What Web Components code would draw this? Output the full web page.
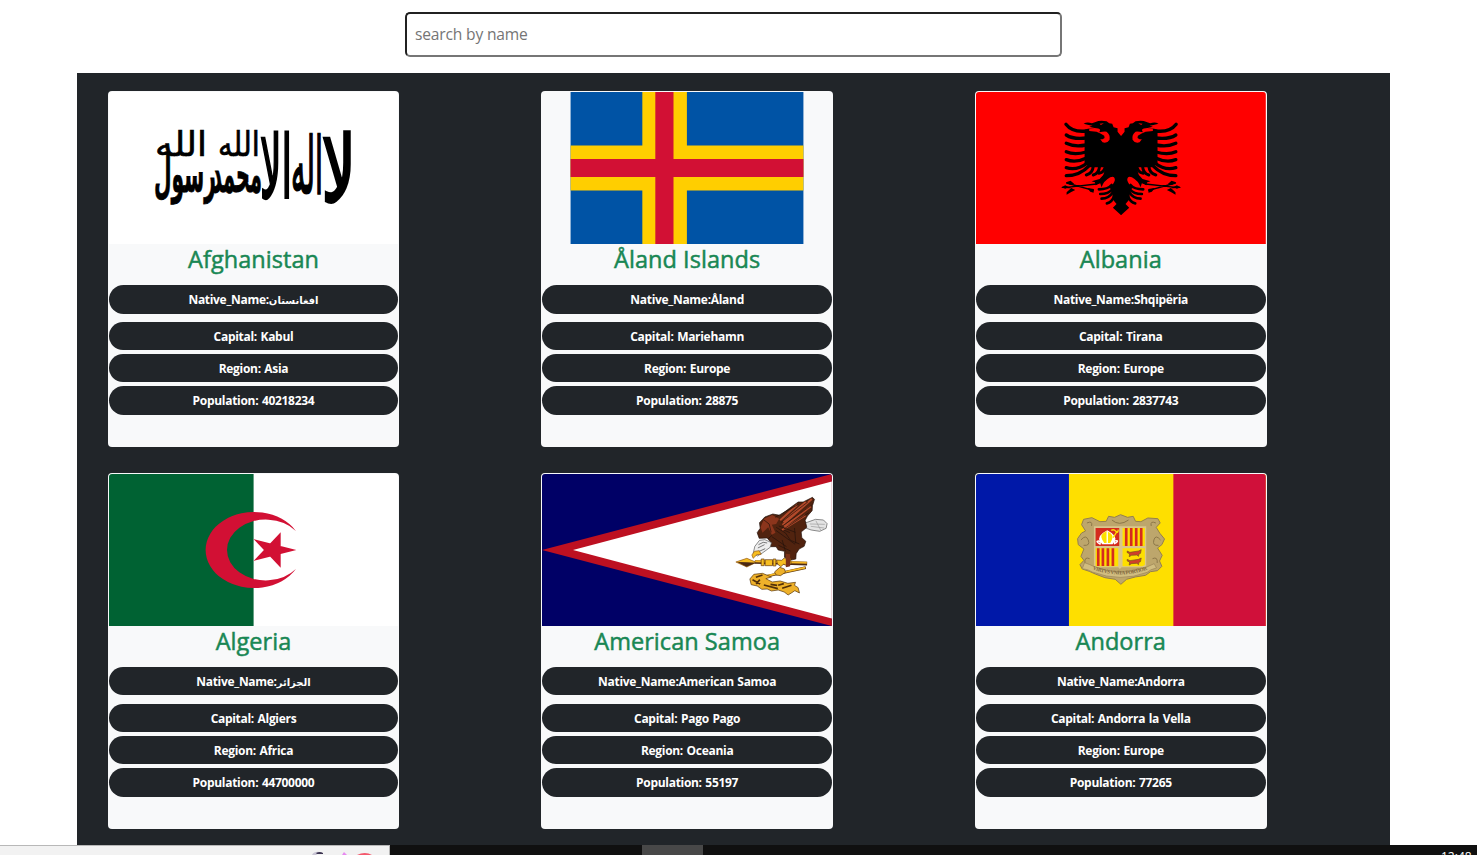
<!DOCTYPE html>
<html lang="en">
<head>
<meta charset="utf-8">
<title>Countries</title>
<style>
html,body{margin:0;height:100%;overflow:hidden;background:#fff}
body{font-family:"Open Sans","Noto Sans","DejaVu Sans",sans-serif;color:#212529}
</style>
</head>
<body>
<countries-app></countries-app>

<template id="flag-af"><svg viewBox="109 92 290 152" preserveAspectRatio="none">
<path fill="#fff" d="M109 92h290v152H109z"/>
<g fill="#000" stroke="#000" stroke-width=".5" font-family="DejaVu Sans,sans-serif" direction="rtl" text-anchor="middle">
<text transform="translate(339 202) scale(1 3.4)" font-size="27" textLength="34" lengthAdjust="spacingAndGlyphs" stroke-width="1">لا</text>
<text transform="translate(307 193) scale(1 2.9)" font-size="27" textLength="32" lengthAdjust="spacingAndGlyphs" stroke-width=".8">اله</text>
<text transform="translate(276 198) scale(1 3.2)" font-size="27" textLength="32" lengthAdjust="spacingAndGlyphs" stroke-width=".9">الا</text>
<text transform="translate(237 192) scale(1 1.7)" font-size="30" font-weight="700" textLength="50" lengthAdjust="spacingAndGlyphs">محمد</text>
<text transform="translate(185 192) scale(1 1.7)" font-size="30" font-weight="700" textLength="62" lengthAdjust="spacingAndGlyphs">رسول</text>
<text transform="translate(239 156) scale(1 1.35)" font-size="25" textLength="42" lengthAdjust="spacingAndGlyphs">الله</text>
<text transform="translate(181 156) scale(1 1.35)" font-size="25" textLength="52" lengthAdjust="spacingAndGlyphs">الله</text>
</g></svg></template>

<template id="flag-ax"><svg viewBox="542 92 290 152" preserveAspectRatio="none">
<path fill="#0053a5" d="M570.6 92h233v152h-233z"/>
<path fill="#ffce00" d="M642.4 92H687v152h-44.6zM570.6 145.6h233v44.8h-233z"/>
<path fill="#d21034" d="M655.4 92h18.2v152h-18.2zM570.6 159h233v18h-233z"/></svg></template>

<template id="flag-al"><svg viewBox="976 92 290 152" preserveAspectRatio="none">
<path fill="red" d="M976 92h290v152H976z"/>
<g transform="translate(1050 105) scale(.3333)">
<g><path d="M214 94 203 80 203 70 191 67 187 56 178 55 170 49Q150 45 137 51L126 55Q112 50 101 56L116 60 128 62 118 65 134 69 114 71 104 74V176L122 187 168 187 160 210 149 222 125 229 135 232 137 241 151 235 155 247Q161 228 181 217 194 211 195 225 192 239 177 247L185 254 190 285 200 297 189 308 213 330H214Z"/>
<g fill="none" stroke="#000" stroke-linecap="round" stroke-width="10">
<path d="M110 78Q67 83 48 58M110 99Q70 104 49 90M109 120Q74 127 49 115M109 141Q72 151 49 140M110 159Q77 175 49 164M112 174Q81 198 49 188M119 181Q90 212 49 212"/>
<path stroke-width="9" d="M130 184Q128 205 109 210M149 184Q147 205 130 210M166 184Q164 202 147 205"/>
<path stroke-width="8" d="M185 240Q174 253 147 253M188 252Q176 267 151 267M188 263Q177 281 155 281M194 271Q186 293 171 295"/>
<path stroke-width="4" d="M140 237 50 247M130 256 50 234M37 247 60 248"/></g>
<path d="m48 232 14-5 11 10-12 3zm2 30 14-13 12 6-12 6-14 8zM35 247l11-6 10 5-10 5zM112 249l20 3-1 11-10-3z"/>
<path fill="red" d="M118 71Q145 66 151 75L148 82Q161 79 170 80 182 89 179 104 172 116 158 112L151 103 158 103 164 99 163 92 153 86 140 80 118 78zM149 56l13-1-9 5z"/></g>
<g transform="translate(427 0) scale(-1 1)"><path d="M214 94 203 80 203 70 191 67 187 56 178 55 170 49Q150 45 137 51L126 55Q112 50 101 56L116 60 128 62 118 65 134 69 114 71 104 74V176L122 187 168 187 160 210 149 222 125 229 135 232 137 241 151 235 155 247Q161 228 181 217 194 211 195 225 192 239 177 247L185 254 190 285 200 297 189 308 213 330H214Z"/>
<g fill="none" stroke="#000" stroke-linecap="round" stroke-width="10">
<path d="M110 78Q67 83 48 58M110 99Q70 104 49 90M109 120Q74 127 49 115M109 141Q72 151 49 140M110 159Q77 175 49 164M112 174Q81 198 49 188M119 181Q90 212 49 212"/>
<path stroke-width="9" d="M130 184Q128 205 109 210M149 184Q147 205 130 210M166 184Q164 202 147 205"/>
<path stroke-width="8" d="M185 240Q174 253 147 253M188 252Q176 267 151 267M188 263Q177 281 155 281M194 271Q186 293 171 295"/>
<path stroke-width="4" d="M140 237 50 247M130 256 50 234M37 247 60 248"/></g>
<path d="m48 232 14-5 11 10-12 3zm2 30 14-13 12 6-12 6-14 8zM35 247l11-6 10 5-10 5zM112 249l20 3-1 11-10-3z"/>
<path fill="red" d="M118 71Q145 66 151 75L148 82Q161 79 170 80 182 89 179 104 172 116 158 112L151 103 158 103 164 99 163 92 153 86 140 80 118 78zM149 56l13-1-9 5z"/></g>
</g></svg></template>

<template id="flag-dz"><svg viewBox="109 474 290 152" preserveAspectRatio="none">
<path fill="#fff" d="M109 474h290v152H109z"/><path fill="#006233" d="M109 474h144.7v152H109z"/>
<path fill="#d21034" d="M296 531A48.4 38 0 1 0 296 569 38.7 30.4 0 1 1 296 531Z"/>
<path fill="#d21034" d="M296.5 550 253.7 539.1 280.8 567.8V532.2L253.7 560.9Z"/></svg></template>

<template id="flag-as"><svg viewBox="542 474 290 152" preserveAspectRatio="none">
<path fill="#006" d="M542 474h290v152H542z"/><path fill="#bd1021" d="M542 550 832 474V626Z"/><path fill="#fff" d="M573 550 832 481.5V618.5Z"/>
<g transform="translate(730 490) scale(.3333)" stroke-linejoin="round">
<path fill="#e4e4e4" stroke="#555" stroke-width="2" d="M215 100 232 97 257 88 281 90 292 101 289 115 270 124 244 120 222 112z"/>
<path fill="none" stroke="#999" stroke-width="2" d="m240 102 45 1m-42 6 40 5m-25-22 15 29"/>
<path fill="#51230f" stroke="#21100a" stroke-width="2" d="M124 158 112 144 88 145 82 128 91 115 89 98 105 81 129 72 150 76 205 36 220 36 248 22 254 28 248 47 247 62 233 78 226 91 231 112 214 126 216 143 228 154 223 169 208 177 199 191 198 207 181 211 164 202 164 184 145 180 139 170 121 170z"/>
<path fill="#8b351c" d="M92 112 103 86 127 75 148 86 139 102 126 104 137 128 126 134 115 112 98 128z"/>
<path fill="none" stroke="#b3492a" stroke-width="6" d="m151 91 51-46m-42 50 68-59m-70 69 88-78m-83 83 80-61M157 120l70-44"/>
<path fill="none" stroke="#21100a" stroke-width="2" d="m136 82 70-39m-52 54 80-61m-76 72 88-63m-84 72 75-49M101 89l17 13 6 25M139 112l28 17 15 22 27 11m-62-54 50 19m-71 13 44 30m-32-49 58 42m-50 3 36 17m-20-63 18 8m-53 7-12 12m42 3 10 34m27-70 4 46"/>
<path fill="#eee" stroke="#555" stroke-width="2" d="M125 158 105 149 89 151 75 169 70 190 83 198 99 188 121 172z"/><path fill="none" stroke="#777" stroke-width="3" d="m86 164 14-7 12 2m-28 15 20-10m-18 21 20-9"/>
<path fill="#f6bd20" stroke="#8e5210" stroke-width="2" d="m74 184 14-2 6 11-13 1-11 11-4-10zM18 216 51 205 79 217 51 231z"/>
<path fill="#4a2814" d="m22 216 28 14 29-12-28-1z"/>
<path stroke="#4a2814" stroke-width="11" d="m75 216 157 5"/><path stroke="#f3b321" stroke-width="6" d="m76 214 155 4"/>
<path fill="#f6bd20" stroke="#61350d" stroke-width="2" d="M94 207h9v20h-9zM106 209h22v18h-22zM130 207h8v21h-8zM143 222l-3-12 16 1 7-7 10 5 8-4 3 15-9 8-14-5-8 7z"/>
<path fill="#793017" d="m168 191 13 2v36l-13 3z"/>
<path stroke="#5d360e" stroke-width="8" d="m91 263 137-30"/><path stroke="#f7ba25" stroke-width="5" d="m91 262 135-29"/>
<path fill="#eeb12a" stroke="#523009" stroke-width="2" d="m134 246 16-14 14 5 3 10-15 10-13-2zM98 250 72 253 60 267 64 284 82 288 96 298 112 297 125 303 145 300 163 306 175 315 186 308 195 302 209 309 205 293 194 286 197 277 174 280 151 273 127 276 108 266 125 261z"/>
<path fill="none" stroke="#523009" stroke-width="5" d="m68 269 23 13m-13-20 20-7m4 30 42 11m-22-13 20 3m15 9 28-9m-40 0 17-5M90 269l-11 13"/></g></svg></template>

<template id="flag-ad"><svg viewBox="976 474 290 152" preserveAspectRatio="none">
<path fill="#fedf00" d="M976 474h290v152H976z"/><path fill="#0018a8" d="M976 474h93v152h-93z"/><path fill="#d0103a" d="M1173.5 474h92.5v152h-92.5z"/>
<g transform="translate(1065 505) scale(.3333)">
<path fill="#bda66c" stroke="#94804e" stroke-width="3" d="M131 34 149 37 167 29 188 37 205 34 212 49 228 50 249 39 279 41 286 54 274 67 285 85 299 102 291 119 278 129 292 151 284 168 291 184 278 197 257 200 242 211 211 216 185 223 168 238 151 223 120 218 91 207 73 199 52 192 45 179 57 166 48 154 57 132 40 119 38 101 50 84 62 78 50 59 56 43 81 38 105 50 124 49z"/>
<path fill="none" stroke="#8c7648" stroke-width="3" d="M141 45q22 20 50 0M66 54q18-8 14 9M273 54q-18-8-14 9M48 105q15-18 22 0t-14 16M287 105q-15-18-20 0t14 16M60 174q-2-20 14-13M277 174q2-20-14-13"/>
<path fill="#d9c58c" d="M87 64h157v123H170l-5 5-5-5H87z"/>
<path fill="#d52b1e" d="M92 69h71v54H92z"/><path fill="#fedf00" d="M173 69h67v54h-67zM92 130h68v54H92zM173 130h67v50l-8 4h-59z"/>
<path stroke="#d52b1e" stroke-width="8" d="M184 69v54m15-54v54m15-54v54m15-54v54M100 130v53m14-53v53m15-53v53m15-53v53"/>
<path fill="#fff" d="M127 76q32 17 22 33l-6 9h-31l-7-9q-10-16 22-33z"/><path fill="#fedf00" d="M126 78q24 12 15 26l-5 10h-18l-6-10q-10-16 14-26z"/><path stroke="#fff" stroke-width="4" d="M127 79v37"/>
<path fill="none" stroke="#fff" stroke-width="4" d="M107 118q-17-10-7-10t4 11M147 117q17-10 7-10t-4 10"/><path fill="none" stroke="#fedf00" stroke-width="4" d="M139 76q8-5 14 3t7-5M145 98l12-20"/>
<path fill="#d0402b" stroke="#73571a" stroke-width="2" d="m187 138 8 4 26-4 8-4-2 11-5 2-1 7-5-4-16 1-7 4 1-9-7-3zM187 163l8 4 26-4 8-4-2 11-5 2-1 7-5-4-16 1-7 4 1-9-7-3z"/>
<path fill="#d1bd80" stroke="#9a8454" stroke-width="2" d="M59 173q15 5 27 11 82 35 162 1l20-9 7 13q-19 4-28 13-80 31-165-1-12-8-30-10z"/>
<path id="motto" fill="none" d="M83 193q84 31 168-1"/>
<text font-family="Liberation Serif,serif" font-weight="700" font-size="16" fill="#80683d"><textPath href="#motto" textLength="168">VIRTVS VNITA FORTIOR</textPath></text>
</g></svg></template>

<script>
class SearchBox extends HTMLElement{
 constructor(){super();this.attachShadow({mode:'open'}).innerHTML=`<style>
 :host{display:block;width:657px;height:45px;margin:12px 0 16px 405px}
 input{box-sizing:border-box;display:block;width:100%;height:100%;padding:0 8px 1px;border:2px solid;border-color:#212121 #767676 #767676 #212121;border-radius:5px;background:#fff;font:15.6px "Open Sans","Noto Sans",sans-serif;letter-spacing:-.18px;color:#212529;outline:0}
 input::placeholder{color:#757575;opacity:1}
 </style><input type="text" placeholder="search by name">`}
}
customElements.define('search-box',SearchBox);

class InfoPill extends HTMLElement{
 constructor(){super();this.attachShadow({mode:'open'}).innerHTML=`<style>
 :host{display:flex;align-items:center;justify-content:center;box-sizing:border-box;height:28.4px;margin-bottom:3.9px;border-radius:15px;background:#212529;color:#fff;font-size:12px;line-height:16px;font-weight:700;letter-spacing:-.3px;word-spacing:.8px;white-space:pre;padding-top:1.7px}
 ::slotted(bdi){font-size:10px;letter-spacing:0}
 </style><span><slot></slot></span>`}
}
customElements.define('info-pill',InfoPill);

class CountryCard extends HTMLElement{
 connectedCallback(){
  const root=this.attachShadow({mode:'open'});
  root.innerHTML=`<style>
  :host{display:block;box-sizing:border-box;width:291.8px;height:355.8px;padding:1px;background:#f8f9fa;border-radius:4px;overflow:hidden}
  .flag{height:152px}
  .flag svg{display:block;width:100%;height:100%;border-radius:3px 3px 0 0}
  h2{margin:0;height:41.3px;line-height:31px;font-size:23.5px;font-weight:500;text-align:center;color:#198754;letter-spacing:.05px;-webkit-text-stroke:.5px #198754;white-space:nowrap}
  .first{margin-bottom:8.1px}
  </style><div class="flag"></div><h2><slot></slot></h2>
  <info-pill class="first"></info-pill><info-pill></info-pill><info-pill></info-pill><info-pill></info-pill>`;
  root.querySelector('.flag').append(document.getElementById('flag-'+this.getAttribute('code')).content.cloneNode(true));
  const p=root.querySelectorAll('info-pill'), native=this.getAttribute('native');
  p[0].textContent='Native_Name:';
  if(/[\u0600-\u06ff]/.test(native)){
   const b=document.createElement('bdi');b.textContent=native;p[0].append(b);
  }else p[0].append(native);
  p[1].textContent='Capital: '+this.getAttribute('capital');
  p[2].textContent='Region: '+this.getAttribute('region');
  p[3].textContent='Population: '+this.getAttribute('population');
 }
}
customElements.define('country-card',CountryCard);

class TaskBar extends HTMLElement{
 constructor(){super();this.attachShadow({mode:'open'}).innerHTML=`<style>
 :host{display:flex;height:10px;background:#101010;overflow:hidden;color:#fff;font-size:12px}
 .search{box-sizing:border-box;width:390px;height:10px;background:#f2f2f2;border-top:1px solid #b8b8b8;border-right:1px solid #b8b8b8}
 svg{display:block;margin-left:308px}
 .active{width:61px;margin-left:252px;background:#484848}
 time{margin-left:738px;margin-top:5px;line-height:14px;white-space:nowrap}
 </style><div class="search"><svg width="70" height="9" viewBox="308 846 70 9"><path fill="#c9c5d4" d="M312 855q2-4 8-3l-4 3z"/><path fill="#3b3350" d="M316 853q4-2 7 0v1h-6z"/><path fill="#e78af0" d="m342 855 2-3 3 3z"/><path fill="#f4586c" d="M357 855q8-4 15 0z"/></svg></div><div class="active"></div><time>12:48</time>`}
}
customElements.define('task-bar',TaskBar);

class CountriesApp extends HTMLElement{
 constructor(){super();
  const data=[['af','Afghanistan','افغانستان','Kabul','Asia','40218234'],['ax','Åland Islands','Åland','Mariehamn','Europe','28875'],['al','Albania','Shqipëria','Tirana','Europe','2837743'],['dz','Algeria','الجزائر','Algiers','Africa','44700000'],['as','American Samoa','American Samoa','Pago Pago','Oceania','55197'],['ad','Andorra','Andorra','Andorra la Vella','Europe','77265']];
  this.attachShadow({mode:'open'}).innerHTML=`<style>
  :host{display:flex;flex-direction:column;height:855px;overflow:hidden}
  search-box,task-bar{flex:none}
  main{box-sizing:border-box;flex:1;min-height:0;overflow:hidden;width:1313px;margin-left:77px;padding:18px 0 0 30.6px;background:#212529;display:grid;grid-template-columns:repeat(3,433.65px);grid-auto-rows:381.8px;align-content:start}
  </style><search-box></search-box><main>${data.map(d=>`<country-card code="${d[0]}" native="${d[2]}" capital="${d[3]}" region="${d[4]}" population="${d[5]}">${d[1]}</country-card>`).join('')}</main><task-bar></task-bar>`}
}
customElements.define('countries-app',CountriesApp);
</script>
</body>
</html>
